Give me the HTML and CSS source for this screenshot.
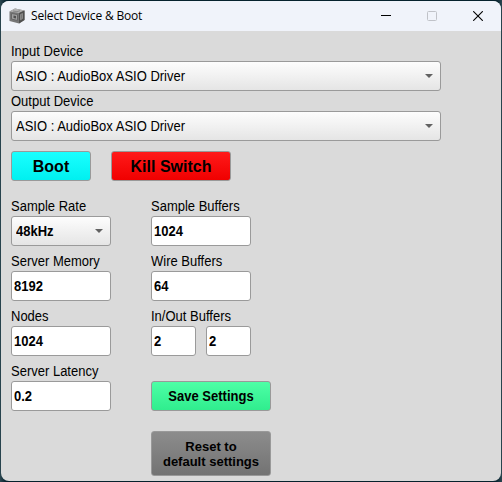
FILE: index.html
```html
<!DOCTYPE html>
<html lang="en">
<head>
<meta charset="utf-8">
<title>Select Device &amp; Boot</title>
<link rel="stylesheet" href="styles.css">
</head>
<body>
<div class="window">
  <header class="titlebar">
    <svg class="app-icon" width="16" height="16" viewBox="0 0 16 16">
      <path d="M.5 3.500 6 .5l9.500 2v9.500l-5.500 3.500-9.500-2.500z" fill="#777"/>
      <path d="M.5 3.500 6 .5l9.500 2L10 5z" fill="#b0b0b0"/>
      <path d="M10 5l5.500-2.500v9.500L10 15.500z" fill="#505050"/>
      <path d="M2.500 5.500l6 1v6l-6-1.500z" fill="#a0a0a0" stroke="#666"/>
      <path d="M4.500 7.500l2.500.5v2.500l-2.500-.5z" fill="#505050"/>
      <path d="M11.500 6.500l2-1v5l-2 1.300z" fill="#777" stroke="#999" stroke-width=".7"/>
      <path d="M4 3l4 .7 3-1" fill="none" stroke="#777" stroke-width=".7"/>
    </svg>
    <span class="title">Select Device &amp; Boot</span>
    <div class="controls">
      <svg width="10" height="10" viewBox="0 0 10 10"><path d="M0 4.500h10" stroke="#000"/></svg>
      <svg width="10" height="10" viewBox="0 0 10 10"><rect x=".5" y=".5" width="9" height="9" rx="1" fill="none" stroke="#c0c2c8"/></svg>
      <svg width="10" height="10" viewBox="0 0 10 10"><path d="M.2.2l9.600 9.600M9.800.2L.2 9.800" stroke="#000" stroke-width="1.100"/></svg>
    </div>
  </header>
  <main class="content">
    <div class="label"><span class="text">Input Device</span></div>
    <div class="select device"><span class="text">ASIO : AudioBox ASIO Driver</span><svg class="arrow" width="8" height="4" viewBox="0 0 8 4"><path d="M0 0h8L4 4z"/></svg></div>
    <div class="label"><span class="text">Output Device</span></div>
    <div class="select device"><span class="text">ASIO : AudioBox ASIO Driver</span><svg class="arrow" width="8" height="4" viewBox="0 0 8 4"><path d="M0 0h8L4 4z"/></svg></div>
    <div class="actions">
      <button class="button boot">Boot</button>
      <button class="button kill">Kill Switch</button>
    </div>
    <div class="settings">
      <div class="column">
        <div class="label"><span class="text">Sample Rate</span></div>
        <div class="select rate"><span class="text">48kHz</span><svg class="arrow" width="8" height="4" viewBox="0 0 8 4"><path d="M0 0h8L4 4z"/></svg></div>
        <div class="label"><span class="text">Server Memory</span></div>
        <div class="field"><span class="text">8192</span></div>
        <div class="label"><span class="text">Nodes</span></div>
        <div class="field"><span class="text">1024</span></div>
        <div class="label"><span class="text">Server Latency</span></div>
        <div class="field"><span class="text">0.2</span></div>
      </div>
      <div class="column">
        <div class="label"><span class="text">Sample Buffers</span></div>
        <div class="field"><span class="text">1024</span></div>
        <div class="label"><span class="text">Wire Buffers</span></div>
        <div class="field"><span class="text">64</span></div>
        <div class="label"><span class="text">In/Out Buffers</span></div>
        <div class="pair">
          <div class="field half"><span class="text">2</span></div>
          <div class="field half"><span class="text">2</span></div>
        </div>
        <button class="button save"><span class="text">Save Settings</span></button>
        <button class="button reset"><span class="text">Reset to<br>default settings</span></button>
      </div>
    </div>
  </main>
</div>
</body>
</html>
```

FILE: styles.css
```css
* { box-sizing: border-box; }
body {
  margin: 0;
  width: 502px;
  height: 482px;
  padding: 1px;
  overflow: hidden;
  background: linear-gradient(90deg, #2b4650, #06222d 6px, #06222d 496px, #2b4650);
  font: 13px/15px "Liberation Sans", Arial, sans-serif;
  color: #000;
}
.window {
  width: 500px;
  height: 480px;
  border-radius: 8px;
  overflow: hidden;
  background: #dadada;
}
.titlebar {
  height: 30px;
  display: flex;
  align-items: center;
  padding: 0 18px 0 8px;
  background: #f0f3fa;
}
.title {
  margin-left: 6px;
  font: 12px/16px "Open Sans", "Noto Sans", sans-serif;
  letter-spacing: -0.17px;
}
.controls { display: flex; gap: 36px; margin-left: auto; }
.content { padding: 10px; }
.text {
  display: inline-block;
  transform: scaleY(1.08);
}
.reset .text { transform: scaleY(1.04); }
.label { height: 20px; line-height: 15px; padding-top: 3px; white-space: nowrap; }
.select, .field {
  height: 30px;
  display: flex;
  align-items: center;
  border: 1px solid #9a9a9a;
  border-radius: 3px;
  white-space: nowrap;
}
.select {
  justify-content: space-between;
  padding: 0 7px 0 4px;
  background: linear-gradient(#fdfdfd, #e5e5e5);
}
.arrow { fill: #626262; }
.device { width: 430px; }
.rate { width: 100px; font-weight: bold; }
.field {
  width: 100px;
  padding-left: 2px;
  background: #fff;
  font-weight: bold;
}
.actions { display: flex; gap: 20px; margin-top: 10px; }
.button {
  display: block;
  height: 30px;
  padding: 0;
  border: 1px solid #999;
  border-radius: 3px;
  font: bold 13px/15px "Liberation Sans", Arial, sans-serif;
  color: #000;
}
.boot { width: 80px; font-size: 16px; background: linear-gradient(#1affff, #00f0f0); }
.kill { width: 120px; font-size: 16px; background: linear-gradient(#ff1a1a, #f00000); }
.settings { display: flex; gap: 40px; margin-top: 15px; }
.column .field + .label, .column .select + .label { margin-top: 5px; }
.pair { display: flex; gap: 10px; }
.half { width: 45px; }
.save { width: 120px; margin-top: 25px; background: linear-gradient(#4dffa6, #30ed8e); }
.reset { width: 120px; height: 45px; margin-top: 20px; background: linear-gradient(#8c8c8c, #737373); }
```
